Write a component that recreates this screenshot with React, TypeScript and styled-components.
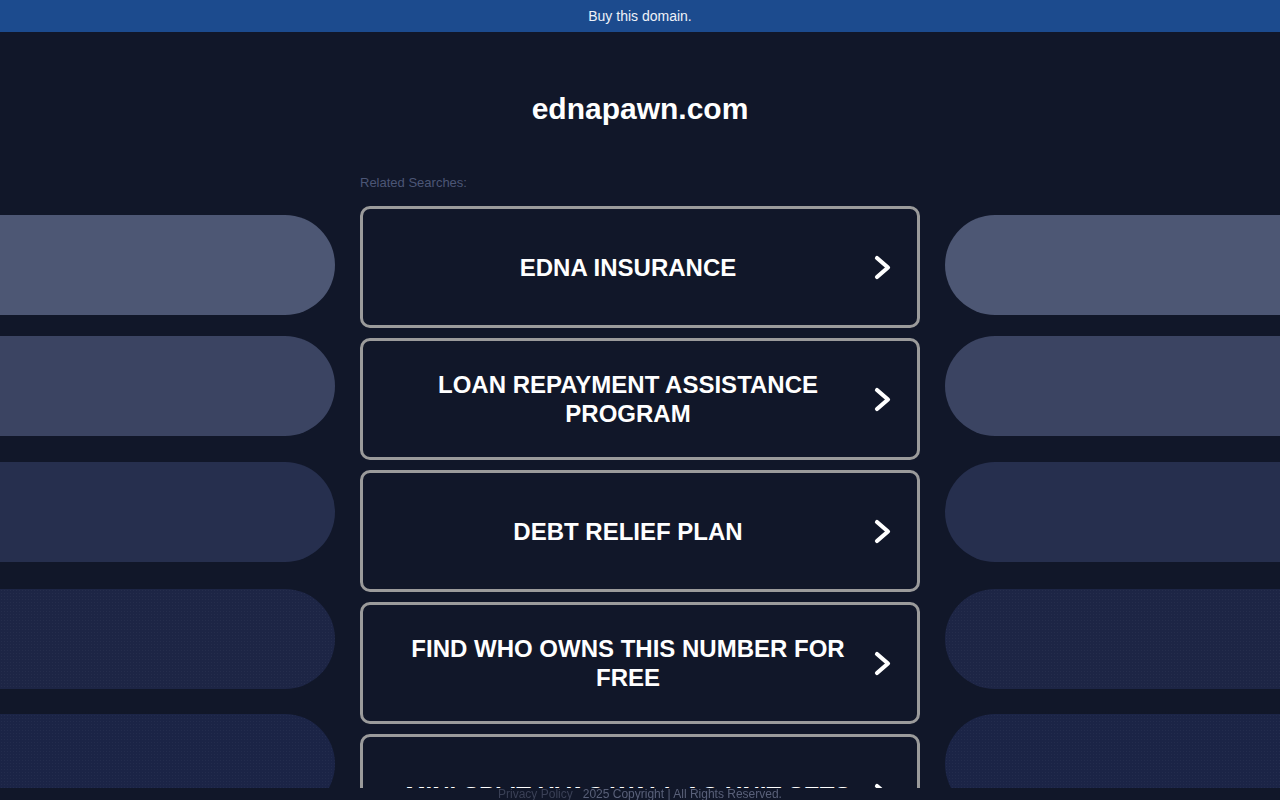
import React from 'react';
import styled, { createGlobalStyle } from 'styled-components';

const GlobalStyle = createGlobalStyle`
  html, body {
    margin: 0;
    padding: 0;
    background: #111729;
    overflow: hidden;
    font-family: 'Liberation Sans', Arial, sans-serif;
  }
`

const TopBar = styled.div`
  height: 32px;
  display: flex;
  align-items: center;
  justify-content: center;
  background-color: #1c4b8e;
  color: #eef2f8;
  font-size: 14px;
`

const Main = styled.div`
  display: grid;
  grid-template-columns: 335px 560px 335px;
  column-gap: 25px;
`

const Side = styled.div`
  display: flex;
  flex-direction: column;
  padding-top: 183px;
`

const Bar = styled.div<{ $color: string; $gap: number; $side: 'left' | 'right'; $dots?: boolean }>`
  height: 100px;
  margin-top: ${p => p.$gap}px;
  background-color: ${p => p.$color};
  background-image: ${p => p.$dots ? 'radial-gradient(rgba(255,255,255,0.035) 0.6px, transparent 0.8px)' : 'none'};
  background-size: 3px 3px;
  border-radius: ${p => p.$side === 'left' ? '0 50px 50px 0' : '50px 0 0 50px'};
`

const Center = styled.div`
  display: flex;
  flex-direction: column;
`

const Title = styled.h1`
  margin: 0;
  padding-top: 60px;
  font-size: 30px;
  line-height: 34px;
  font-weight: bold;
  color: #ffffff;
  text-align: center;
`

const Related = styled.div`
  margin-top: 49px;
  font-size: 13px;
  line-height: 15px;
  color: #4c5676;
`

const List = styled.div`
  display: flex;
  flex-direction: column;
  gap: 10px;
  margin-top: 16px;
`

const Card = styled.a`
  display: flex;
  align-items: center;
  box-sizing: border-box;
  height: 122px;
  border: 3px solid #9b9b9b;
  border-radius: 10px;
  color: #ffffff;
  text-decoration: none;
`

const CardText = styled.span`
  flex: 1;
  padding-left: 22px;
  font-size: 24px;
  line-height: 29px;
  font-weight: bold;
  text-align: center;
  text-transform: uppercase;
`

const Chevron = styled.svg`
  flex: none;
  width: 22px;
  height: 27px;
  margin-right: 24px;
`

const Footer = styled.div`
  position: fixed;
  left: 0;
  right: 0;
  bottom: 0;
  height: 12px;
  display: flex;
  align-items: center;
  justify-content: center;
  background: #111729;
  font-size: 12px;
  color: #596079;
  white-space: pre;
`

const Privacy = styled.span`
  color: #3a4056;
`

const bars = [
  { color: '#4d5774', gap: 0 },
  { color: '#3b4462', gap: 21 },
  { color: '#262f4e', gap: 26 },
  { color: '#1d2545', gap: 27, dots: true },
  { color: '#1b2446', gap: 25, dots: true },
]

const searches = [
  'Edna Insurance',
  'Loan Repayment Assistance Program',
  'Debt Relief Plan',
  'Find Who Owns This Number for Free',
  'Mini Split HVAC Wall AC Unit Sets',
]

const App: React.FC = () => {
  return (
    <>
      <GlobalStyle />
      <TopBar>Buy this domain.</TopBar>
      <Main>
        <Side>
          {bars.map((b, i) => (
            <Bar key={i} $color={b.color} $gap={b.gap} $side="left" $dots={b.dots} />
          ))}
        </Side>
        <Center>
          <Title>ednapawn.com</Title>
          <Related>Related Searches:</Related>
          <List>
            {searches.map(s => (
              <Card key={s} href="#">
                <CardText>{s}</CardText>
                <Chevron viewBox="0 0 22 27">
                  <polyline
                    points="6,4 17,13.5 6,23"
                    fill="none"
                    stroke="#ffffff"
                    strokeWidth="4.2"
                    strokeLinecap="round"
                    strokeLinejoin="round"
                  />
                </Chevron>
              </Card>
            ))}
          </List>
        </Center>
        <Side>
          {bars.map((b, i) => (
            <Bar key={i} $color={b.color} $gap={b.gap} $side="right" $dots={b.dots} />
          ))}
        </Side>
      </Main>
      <Footer>
        <Privacy>Privacy Policy</Privacy>{'   2025 Copyright | All Rights Reserved.'}
      </Footer>
    </>
  )
}

export default App
